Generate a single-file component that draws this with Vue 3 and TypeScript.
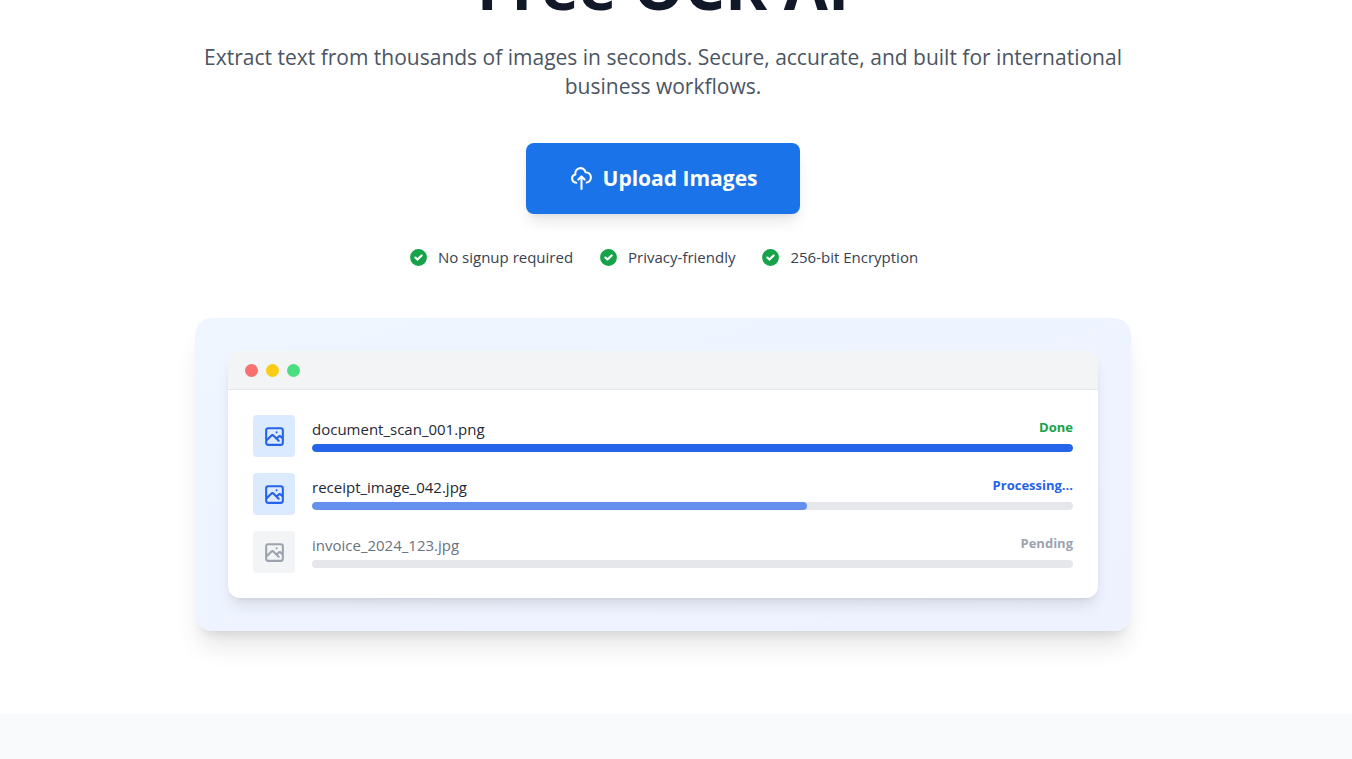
<script setup lang="ts">
interface FileRow {
  name: string
  status: string
  tone: 'done' | 'active' | 'idle'
  progress: number
}

const perks: string[] = ['No signup required', 'Privacy-friendly', '256-bit Encryption']

const files: FileRow[] = [
  { name: 'document_scan_001.png', status: 'Done', tone: 'done', progress: 100 },
  { name: 'receipt_image_042.jpg', status: 'Processing...', tone: 'active', progress: 65 },
  { name: 'invoice_2024_123.jpg', status: 'Pending', tone: 'idle', progress: 0 },
]
</script>

<template>
  <main class="page">
    <section class="hero">
      <div class="container">
        <h1 class="title">Free OCR AI</h1>
        <p class="lead">
          Extract text from thousands of images in seconds. Secure, accurate, and built for international<br />
          business workflows.
        </p>

        <button class="upload" type="button">
          <svg class="upload-icon" viewBox="0 0 24 24" aria-hidden="true">
            <path d="M7 16a4 4 0 01-.88-7.903A5 5 0 1115.9 6L16 6a5 5 0 011 9.9M15 13l-3-3m0 0l-3 3m3-3v12" />
          </svg>
          <span>Upload Images</span>
        </button>

        <ul class="perks">
          <li v-for="perk in perks" :key="perk" class="perk">
            <svg class="perk-icon" viewBox="0 0 20 20" aria-hidden="true">
              <path
                fill-rule="evenodd"
                clip-rule="evenodd"
                d="M10 18a8 8 0 100-16 8 8 0 000 16zm3.707-9.293a1 1 0 00-1.414-1.414L9 10.586 7.707 9.293a1 1 0 00-1.414 1.414l2 2a1 1 0 001.414 0l4-4z"
              />
            </svg>
            <span>{{ perk }}</span>
          </li>
        </ul>

        <div class="preview">
          <div class="window">
            <div class="window-bar">
              <span class="dot dot-red"></span>
              <span class="dot dot-yellow"></span>
              <span class="dot dot-green"></span>
            </div>
            <ul class="files">
              <li v-for="file in files" :key="file.name" class="file" :class="file.tone">
                <span class="thumb">
                  <svg class="thumb-icon" viewBox="0 0 24 24" aria-hidden="true">
                    <path
                      d="M4 16l4.586-4.586a2 2 0 012.828 0L16 16m-2-2l1.586-1.586a2 2 0 012.828 0L20 14m-6-6h.01M6 20h12a2 2 0 002-2V6a2 2 0 00-2-2H6a2 2 0 00-2 2v12a2 2 0 002 2z"
                    />
                  </svg>
                </span>
                <div class="info">
                  <div class="labels">
                    <span class="name">{{ file.name }}</span>
                    <span class="status">{{ file.status }}</span>
                  </div>
                  <div
                    class="track"
                    role="progressbar"
                    :aria-label="file.name"
                    :aria-valuenow="file.progress"
                    aria-valuemin="0"
                    aria-valuemax="100"
                  >
                    <div class="fill" :style="{ width: file.progress + '%' }"></div>
                  </div>
                </div>
              </li>
            </ul>
          </div>
        </div>
      </div>
    </section>
    <section class="next"></section>
  </main>
</template>

<style>
body {
  background: #ffffff;
}
</style>

<style scoped>
.page {
  display: flex;
  flex-direction: column;
  height: 100vh;
  overflow: hidden;
  font-family: "Segoe UI", "Open Sans", "Noto Sans", sans-serif;
  color: #374151;
}

.hero {
  flex: none;
  padding: 0 26px 83px 0;
}

.container {
  display: flex;
  flex-direction: column;
  align-items: center;
  max-width: 936px;
  margin: 0 auto;
}

.title {
  margin: -52px 0 19px;
  font-size: 64px;
  font-weight: 700;
  line-height: 76px;
  color: #111827;
}

.lead {
  margin: 0 0 42px;
  font-size: 21px;
  line-height: 29px;
  text-align: center;
  white-space: nowrap;
  color: #4b5563;
}

.upload {
  display: flex;
  align-items: center;
  gap: 9px;
  padding: 21px 43px;
  border: 0;
  border-radius: 8px;
  background: #1a73e8;
  box-shadow: 0 10px 15px -3px rgba(0, 0, 0, 0.1), 0 4px 6px -4px rgba(0, 0, 0, 0.1);
  font-family: inherit;
  font-size: 21px;
  font-weight: 700;
  line-height: 29px;
  color: #ffffff;
  cursor: pointer;
}

.upload-icon,
.thumb-icon {
  width: 25px;
  height: 25px;
  fill: none;
  stroke: currentColor;
  stroke-width: 2;
  stroke-linecap: round;
  stroke-linejoin: round;
}

.perks {
  display: flex;
  justify-content: center;
  gap: 25px;
  margin: 31px 0 48px;
  padding: 0;
  list-style: none;
}

.perk {
  display: flex;
  align-items: center;
  gap: 9px;
  font-size: 15px;
  line-height: 25px;
  white-space: nowrap;
}

.perk-icon {
  width: 21px;
  height: 21px;
  fill: #16a34a;
}

.preview {
  box-sizing: border-box;
  width: 100%;
  padding: 33px;
  border-radius: 17px;
  background: linear-gradient(to bottom right, #eff6ff, #eef2ff);
  box-shadow: 0 20px 25px -5px rgba(0, 0, 0, 0.1), 0 8px 10px -6px rgba(0, 0, 0, 0.1);
}

.window {
  overflow: hidden;
  border-radius: 12px;
  background: #ffffff;
  box-shadow: 0 10px 15px -3px rgba(0, 0, 0, 0.1), 0 4px 6px -4px rgba(0, 0, 0, 0.1);
}

.window-bar {
  display: flex;
  align-items: center;
  gap: 8px;
  height: 38px;
  padding: 0 17px;
  border-bottom: 1px solid #e5e7eb;
  background: #f3f4f6;
}

.dot {
  width: 13px;
  height: 13px;
  border-radius: 50%;
}

.dot-red {
  background: #f87171;
}

.dot-yellow {
  background: #facc15;
}

.dot-green {
  background: #4ade80;
}

.files {
  display: flex;
  flex-direction: column;
  gap: 16px;
  margin: 0;
  padding: 25px;
  list-style: none;
}

.file {
  display: flex;
  gap: 17px;
}

.thumb {
  display: flex;
  flex: none;
  align-items: center;
  justify-content: center;
  width: 42px;
  height: 42px;
  border-radius: 4px;
  background: #dbeafe;
  color: #2563eb;
}

.info {
  flex: 1;
  min-width: 0;
}

.labels {
  display: flex;
  align-items: flex-start;
  justify-content: space-between;
}

.name {
  font-size: 15px;
  line-height: 29px;
  color: #1f2937;
}

.status {
  font-size: 13px;
  font-weight: 700;
  line-height: 25px;
}

.track {
  height: 8px;
  overflow: hidden;
  border-radius: 4px;
  background: #e5e7eb;
}

.fill {
  height: 100%;
  border-radius: 4px;
  background: #2563eb;
}

.done .status {
  color: #16a34a;
}

.active .status {
  color: #2563eb;
}

.active .fill {
  background: #6690ee;
}

.idle .thumb {
  background: #f3f4f6;
  color: #9ca3af;
}

.idle .name {
  color: #6b7280;
}

.idle .status {
  color: #9ca3af;
}

.next {
  flex: 1;
  background: #f9fafb;
}
</style>
